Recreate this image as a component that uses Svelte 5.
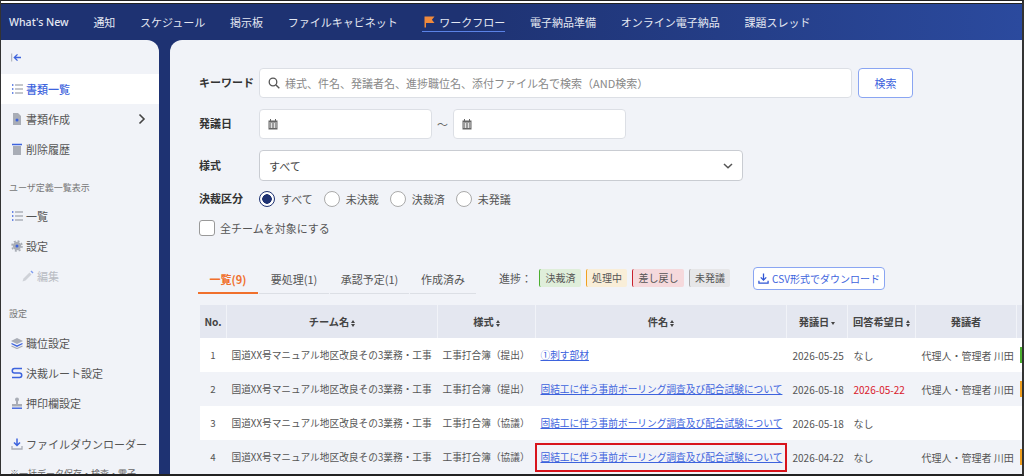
<script>
	const navItems = ['通知', 'スケジュール', '掲示板', 'ファイルキャビネット'];
	const navRest = ['電子納品準備', 'オンライン電子納品', '課題スレッド'];
	const radios = ['すべて', '未決裁', '決裁済', '未発議'];
	const team = '国道XX号マニュアル地区改良その3業務・工事';
	const subject = '固結工に伴う事前ボーリング調査及び配合試験について';
	const sender = '代理人・管理者 川田';
	const rows = [
		{ no: 1, style: '工事打合簿（提出）', title: '①刺す部材', date: '2026-05-25', reply: 'なし', sender, mark: 'green' },
		{ no: 2, style: '工事打合簿（提出）', title: subject, date: '2026-05-18', reply: '2026-05-22', late: true, sender, mark: 'orange' },
		{ no: 3, style: '工事打合簿（協議）', title: subject, date: '2026-05-18', reply: 'なし', sender: '', mark: '' },
		{ no: 4, style: '工事打合簿（協議）', title: subject, date: '2026-04-22', reply: 'なし', sender, mark: 'orange', boxed: true }
	];
</script>

<div class="frame">
	<header class="nav">
		<span class="nav-item first">What's New</span>
		{#each navItems as item}
			<span class="nav-item">{item}</span>
		{/each}
		<span class="nav-item active">
			<svg width="11" height="12" viewBox="0 0 11 12"><path d="M0.5 0.5h10l-2.6 3.2 2.6 3.3H2V11.5H0.5z" fill="#f08a3c" /></svg>
			ワークフロー
		</span>
		{#each navRest as item}
			<span class="nav-item">{item}</span>
		{/each}
	</header>

	<div class="body">
		<aside class="side">
			<div class="collapse">
				<svg width="11" height="9" viewBox="0 0 11 9"><path d="M0.7 0.5v8" stroke="#a9adb6" fill="none" /><path d="M10 4.5H3.5M6.5 1.4 3.3 4.5l3.2 3.1" stroke="#3d63dd" stroke-width="1.3" fill="none" /></svg>
			</div>
			<div class="side-item current">
				<svg class="ic" width="12" height="10" viewBox="0 0 12 10"><path d="M1 1h1.4M1 5h1.4M1 9h1.4" stroke="#3d63dd" stroke-width="1.5" fill="none" /><path d="M4 1h8M4 5h8M4 9h8" stroke="#8a8f99" stroke-width="1" fill="none" /></svg>
				書類一覧
			</div>
			<div class="side-item">
				<svg class="ic" width="12" height="12" viewBox="0 0 12 12"><path d="M2 0h5l3 3v9H2z" fill="#a9adb6" /><circle cx="6" cy="7" r="1.5" fill="#3d63dd" /></svg>
				書類作成
				<svg class="chev" width="8" height="12" viewBox="0 0 8 12"><path d="M1.5 1.5 6 6l-4.5 4.5" stroke="#444" stroke-width="1.6" fill="none" /></svg>
			</div>
			<div class="side-item">
				<svg class="ic" width="12" height="12" viewBox="0 0 12 12"><path d="M2 3h8v9H2z" fill="#a9adb6" /><path d="M1 1.5h10" stroke="#3d63dd" stroke-width="1.6" fill="none" /></svg>
				削除履歴
			</div>
			<div class="side-label user">ユーザ定義一覧表示</div>
			<div class="side-item">
				<svg class="ic" width="12" height="10" viewBox="0 0 12 10"><path d="M1 1h1.4M1 5h1.4M1 9h1.4" stroke="#3d63dd" stroke-width="1.5" fill="none" /><path d="M4 1h8M4 5h8M4 9h8" stroke="#8a8f99" stroke-width="1" fill="none" /></svg>
				一覧
			</div>
			<div class="side-item">
				<svg class="ic" width="12" height="12" viewBox="0 0 12 12"><circle cx="6" cy="6" r="4.2" fill="#a9adb6" /><circle cx="6" cy="6" r="5" fill="none" stroke="#a9adb6" stroke-width="1.6" stroke-dasharray="2 1.93" /><circle cx="6" cy="6" r="1.5" fill="#3d63dd" /></svg>
				設定
			</div>
			<div class="side-item sub">
				<svg class="ic" width="12" height="12" viewBox="0 0 12 12"><path d="M0.5 11.5 1.5 8.500 7.500 2.500l2 2-6 6z" fill="#cfd2d8" /><path d="M8.500 1.500l1-1 2 2-1 1z" fill="#7f9bf0" /></svg>
				編集
			</div>
			<div class="side-label conf">設定</div>
			<div class="side-item">
				<svg class="ic" width="12" height="11" viewBox="0 0 12 11"><path d="M6 0l6 3-6 3-6-3z" fill="#a9adb6" /><path d="M0.500 5.500 6 8.200l5.500-2.700" stroke="#3d63dd" stroke-width="1.3" fill="none" /><path d="M0.500 8 6 10.500 11.500 8" stroke="#a9adb6" stroke-width="1.3" fill="none" /></svg>
				職位設定
			</div>
			<div class="side-item">
				<svg class="ic" width="12" height="12" viewBox="0 0 12 12"><path d="M11 1.500H3.500a2.200 2.200 0 0 0 0 4.500h5a2.200 2.200 0 0 1 0 4.500H1" stroke="#3d63dd" stroke-width="1.5" fill="none" /></svg>
				決裁ルート設定
			</div>
			<div class="side-item">
				<svg class="ic" width="12" height="12" viewBox="0 0 12 12"><circle cx="6" cy="2.500" r="2" fill="#a9adb6" /><path d="M5 4h2v3h4v2.500H1V7h4z" fill="#a9adb6" /><path d="M1 11.200h10" stroke="#3d63dd" stroke-width="1.4" /></svg>
				押印欄設定
			</div>
			<div class="side-item download">
				<svg class="ic" width="12" height="12" viewBox="0 0 12 12"><path d="M6 0.500v6.500M3 4.500 6 7.500l3-3" stroke="#3d63dd" stroke-width="1.5" fill="none" /><path d="M1 8v3h10V8" stroke="#a9adb6" stroke-width="1.3" fill="none" /></svg>
				ファイルダウンローダー
			</div>
			<div class="side-note">※一括データ保存・検査・電子</div>
		</aside>

		<main class="main">
			<div class="form-row keyword">
				<span class="label">キーワード</span>
				<div class="input search">
					<svg width="12" height="12" viewBox="0 0 12 12"><circle cx="5" cy="5" r="3.800" stroke="#555" stroke-width="1.3" fill="none" /><path d="M8 8l3.300 3.300" stroke="#555" stroke-width="1.4" /></svg>
					<span class="placeholder">様式、件名、発議者名、進捗職位名、添付ファイル名で検索（AND検索）</span>
				</div>
				<button class="btn search-btn">検索</button>
			</div>

			<div class="form-row dates">
				<span class="label">発議日</span>
				<div class="input date">
					<svg width="10" height="11" viewBox="0 0 10 11"><path d="M0.500 1.500h9v9h-9z" fill="#666" /><path d="M2.500 0v2M7.500 0v2" stroke="#666" /><path d="M1 4h8M1 6h8M1 8h8M3.500 4v5M6.500 4v5" stroke="#fff" stroke-width=".7" /></svg>
				</div>
				<span class="tilde">〜</span>
				<div class="input date">
					<svg width="10" height="11" viewBox="0 0 10 11"><path d="M0.500 1.500h9v9h-9z" fill="#666" /><path d="M2.500 0v2M7.500 0v2" stroke="#666" /><path d="M1 4h8M1 6h8M1 8h8M3.500 4v5M6.500 4v5" stroke="#fff" stroke-width=".7" /></svg>
				</div>
			</div>

			<div class="form-row style">
				<span class="label">様式</span>
				<div class="input select">
					<span>すべて</span>
					<svg width="10" height="6" viewBox="0 0 10 6"><path d="M1 1l4 3.800L9 1" stroke="#555" stroke-width="1.5" fill="none" /></svg>
				</div>
			</div>

			<div class="form-row radios">
				<span class="label">決裁区分</span>
				{#each radios as radio, i}
					<span class="radio-item">
						<span class="radio" class:on={i === 0}></span>
						{radio}
					</span>
				{/each}
			</div>

			<div class="check-row">
				<span class="check"></span>
				全チームを対象にする
			</div>

			<div class="tabs-row">
				<div class="tab active">一覧(9)</div>
				<div class="tab t2">要処理(1)</div>
				<div class="tab t3">承認予定(1)</div>
				<div class="tab t4">作成済み</div>
				<span class="legend-label">進捗：</span>
				<span class="chip green">決裁済</span>
				<span class="chip orange">処理中</span>
				<span class="chip red">差し戻し</span>
				<span class="chip gray">未発議</span>
				<button class="btn csv">
					<svg width="11" height="11" viewBox="0 0 12 12"><path d="M6 0.500v7M3 4.800 6 7.800l3-3" stroke="#2f55d4" stroke-width="1.4" fill="none" /><path d="M1 8.500v2.500h10V8.500" stroke="#2f55d4" stroke-width="1.4" fill="none" /></svg>
					CSV形式でダウンロード
				</button>
			</div>

			<table class="list">
				<colgroup>
					<col class="c-no" /><col class="c-team" /><col class="c-style" /><col class="c-title" /><col class="c-date" /><col class="c-reply" /><col class="c-sender" /><col class="c-mark" />
				</colgroup>
				<thead>
					<tr>
						<th>No.</th>
						<th>チーム名<span class="sort"></span></th>
						<th>様式<span class="sort"></span></th>
						<th>件名<span class="sort"></span></th>
						<th>発議日<span class="sort down"></span></th>
						<th>回答希望日<span class="sort"></span></th>
						<th>発議者</th>
						<th></th>
					</tr>
				</thead>
				<tbody>
					{#each rows as row}
						<tr>
							<td class="no">{row.no}</td>
							<td>{team}</td>
							<td>{row.style}</td>
							<td class:boxed={row.boxed}><span class="link">{row.title}</span></td>
							<td class="meta">{row.date}</td>
							<td class="meta" class:late={row.late}>{row.reply}</td>
							<td class="meta">{row.sender}</td>
							<td class="mark-cell">
								{#if row.mark}<span class="mark {row.mark}"></span>{/if}
							</td>
						</tr>
					{/each}
				</tbody>
			</table>
		</main>
	</div>
</div>

<style>
	:global(body) {
		margin: 0;
		background: #fff;
	}
	.frame {
		width: 1024px;
		height: 476px;
		box-sizing: border-box;
		overflow: hidden;
		display: flex;
		flex-direction: column;
		background: #1e3272;
		border-top: 1px solid #222;
		border-left: 1px solid #333;
		border-right: 2px solid #333;
		border-bottom: 2px solid #222;
		font-family: 'Noto Sans CJK JP', 'Noto Sans', sans-serif;
		color: #444;
	}
	.frame::before {
		content: '';
		display: block;
		height: 2px;
		background: #fff;
		border-bottom: 1px solid #222;
		flex: none;
	}
	.nav {
		height: 36px;
		flex: none;
		display: flex;
		align-items: center;
		padding-left: 8px;
		gap: 24.7px;
		background: linear-gradient(90deg, #1e3272 0%, #1e3272 45%, #2b4a9e 100%);
		color: #e4e8f2;
		font-size: 11px;
		white-space: nowrap;
		box-sizing: border-box;
	}
	.nav-item.first {
		font-family: 'Noto Sans', sans-serif;
		font-weight: 500;
		font-size: 10.6px;
	}
	.nav-item.active {
		display: flex;
		align-items: center;
		gap: 4px;
		border-bottom: 1px solid #5b82e6;
		padding: 0 0 1px 2px;
		margin-top: 2px;
	}
	.body {
		flex: 1;
		min-height: 0;
		display: flex;
		gap: 11px;
	}
	.side {
		width: 158px;
		flex: none;
		background: #f1f3f8;
		border-radius: 0 12px 0 0;
		font-size: 11px;
		overflow: hidden;
	}
	.collapse {
		height: 34px;
		display: flex;
		align-items: center;
		padding-left: 10px;
		box-sizing: border-box;
	}
	.side-item {
		height: 30px;
		display: flex;
		align-items: center;
		gap: 3px;
		padding-left: 10px;
		color: #555;
		position: relative;
		white-space: nowrap;
	}
	.ic {
		flex: none;
		width: 12px;
	}
	.side-item.current {
		background: #fff;
		color: #3d63dd;
		font-weight: 500;
	}
	.chev {
		position: absolute;
		right: 13px;
		top: 9px;
	}
	.side-item.sub {
		padding-left: 21px;
		color: #b9bcc3;
	}
	.side-label {
		font-size: 9px;
		color: #777;
		padding-left: 8px;
		height: 14px;
		line-height: 14px;
	}
	.side-label.user {
		margin-top: 17px;
		margin-bottom: 6px;
	}
	.side-label.conf {
		margin-top: 16px;
		margin-bottom: 7px;
	}
	.side-item.download {
		margin-top: 11px;
	}
	.side-note {
		font-size: 9px;
		color: #666;
		padding-left: 9px;
		margin-top: 8px;
		white-space: nowrap;
	}
	.main {
		flex: 1;
		min-width: 0;
		background: #f1f3f8;
		border-radius: 12px 0 0 0;
		padding: 28px 0 0 29px;
		box-sizing: border-box;
		overflow: hidden;
		font-size: 11px;
	}
	.form-row {
		display: flex;
		align-items: center;
	}
	.label {
		width: 60px;
		flex: none;
		font-weight: 700;
		color: #333;
		margin-top: -2px;
	}
	.input {
		height: 30px;
		box-sizing: border-box;
		background: #fff;
		border: 1px solid #dcdfe5;
		border-radius: 4px;
		display: flex;
		align-items: center;
		padding-left: 8px;
	}
	.search {
		width: 593px;
		gap: 5px;
	}
	.placeholder {
		color: #888;
		white-space: nowrap;
	}
	.btn {
		font: inherit;
		background: #fff;
		border: 1px solid #8aa5f2;
		border-radius: 4px;
		color: #3d63dd;
		padding: 0;
	}
	.search-btn {
		width: 55px;
		height: 30px;
		margin-left: 6px;
	}
	.dates {
		margin-top: 11px;
	}
	.date {
		width: 173px;
	}
	.tilde {
		width: 21px;
		text-align: center;
		color: #666;
	}
	.style {
		margin-top: 11px;
	}
	.select {
		width: 484px;
		height: 31px;
		justify-content: space-between;
		padding: 0 9px;
		border-color: #c9ccd2;
		color: #444;
	}
	.radios {
		margin-top: 10px;
		height: 16px;
	}
	.radio-item {
		display: flex;
		align-items: center;
		gap: 6px;
		margin-right: 11px;
		color: #555;
	}
	.radio {
		width: 16px;
		height: 16px;
		box-sizing: border-box;
		border: 1px solid #aaa;
		border-radius: 50%;
		background: #fff;
		flex: none;
	}
	.radio.on {
		border-color: #1e3272;
		background: radial-gradient(circle, #1e3272 0 4.5px, #fff 5px);
	}
	.check-row {
		display: flex;
		align-items: center;
		gap: 5px;
		margin-top: 13px;
		height: 16px;
		color: #555;
	}
	.check {
		width: 16px;
		height: 16px;
		box-sizing: border-box;
		border: 1px solid #999;
		border-radius: 3px;
		background: #fff;
	}
	.tabs-row {
		display: flex;
		align-items: center;
		margin-top: 31px;
		height: 27px;
		margin-left: -1px;
		white-space: nowrap;
	}
	.tab {
		height: 26px;
		line-height: 22px;
		box-sizing: border-box;
		text-align: center;
		color: #555;
		border-bottom: 1px solid #dcdfe5;
		margin-right: 1px;
	}
	.tab.active {
		width: 60px;
		color: #f0702c;
		font-weight: 700;
		border-bottom: 2px solid #f0702c;
	}
	.t2 { width: 70px; }
	.t3 { width: 79px; }
	.t4 { width: 66px; }
	.legend-label {
		margin-left: 22px;
		margin-right: 7px;
		color: #555;
		margin-bottom: 5px;
	}
	.chip {
		height: 18px;
		line-height: 18px;
		padding: 0 5px 0 5.5px;
		margin-right: 5px;
		font-size: 10px;
		color: #555;
		border-radius: 2px;
		border-left: 1px solid;
		margin-bottom: 5px;
	}
	.chip.green { background: #dfeeda; border-color: #4caf30; }
	.chip.orange { background: #f9eed8; border-color: #f0a020; }
	.chip.red { background: #f5d9dc; border-color: #c8202c; }
	.chip.gray { background: #e6e6e8; border-color: #aaa; }
	.csv {
		width: 132px;
		height: 23px;
		margin-left: 18px;
		margin-bottom: 5px;
		font-size: 10px;
		display: flex;
		align-items: center;
		justify-content: center;
		gap: 3px;
	}
	.list {
		width: 837px;
		margin-top: 11px;
		border-collapse: collapse;
		table-layout: fixed;
		font-size: 9.7px;
		color: #555;
	}
	.c-no { width: 27px; }
	.c-team { width: 211px; }
	.c-style { width: 98px; }
	.c-title { width: 251px; }
	.c-date { width: 61px; }
	.c-reply { width: 68px; }
	.c-sender { width: 101px; }
	.c-mark { width: 20px; }
	.list th {
		height: 33px;
		background: #e4e7f0;
		border-left: 1px solid #f1f3f8;
		font-size: 10.2px;
		font-weight: 700;
		color: #444;
		padding: 0;
		white-space: nowrap;
	}
	.list td {
		height: 34px;
		padding: 0 5px;
		white-space: nowrap;
		overflow: hidden;
		box-sizing: border-box;
		background: #fff;
	}
	.list td.meta {
		padding: 0 0 0 6px;
		font-size: 10px;
	}
	.list tbody tr:nth-child(even) td {
		background: #f1f3f8;
	}
	.list td.no {
		text-align: center;
		padding: 0;
	}
	.sort {
		display: inline-flex;
		flex-direction: column;
		gap: 1px;
		margin-left: 2px;
		vertical-align: middle;
	}
	.sort::before,
	.sort::after {
		content: '';
		border-left: 2.5px solid transparent;
		border-right: 2.5px solid transparent;
	}
	.sort::before {
		border-bottom: 3px solid #444;
	}
	.sort::after {
		border-top: 3px solid #444;
	}
	.sort.down::before {
		display: none;
	}
	.link {
		color: #3d63dd;
		text-decoration: underline;
	}
	.late {
		color: #d9202c;
	}
	.list td.boxed {
		position: relative;
		overflow: visible;
	}
	.list td.boxed::after {
		content: '';
		position: absolute;
		inset: 3px 0 2px -1px;
		border: 2px solid #d8141c;
	}
	.mark-cell {
		padding: 0 !important;
	}
	.mark {
		display: block;
		width: 2px;
		height: 16px;
		margin-left: 3px;
	}
	.mark.green { background: #4caf30; }
	.mark.orange { background: #f0a020; }
</style>
